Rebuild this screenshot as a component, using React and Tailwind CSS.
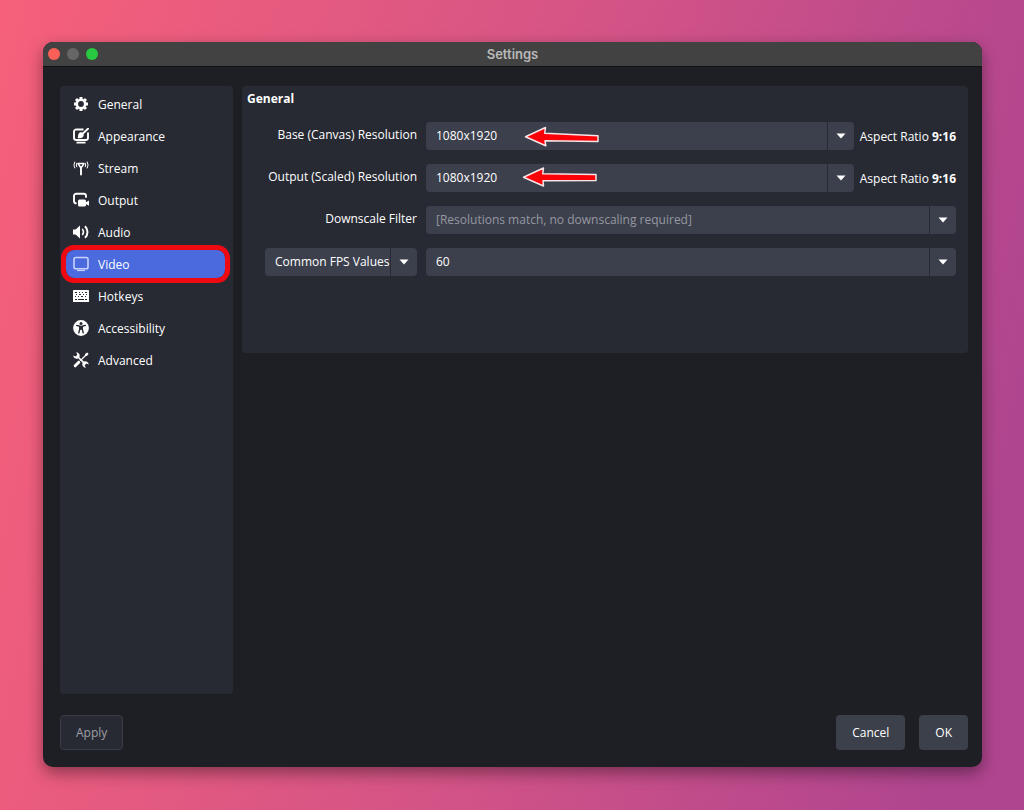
import React, { useState } from "react";

function GearIcon() {
  return (
    <svg viewBox="0 0 16 16" className="size-4" fill="none" stroke="currentColor" aria-hidden="true">
      <circle cx="8" cy="8" r="4.200" strokeWidth="2.600" />
      <path
        d="M8 1v2M8 13v2M1 8h2M13 8h2M3 3l1.500 1.500M11.500 11.500l1.500 1.500M3 13l1.500-1.500M11.500 4.500l1.500-1.500"
        strokeWidth="3"
      />
    </svg>
  );
}

function AppearanceIcon() {
  return (
    <svg viewBox="0 0 16 16" className="size-4" fill="none" stroke="currentColor" aria-hidden="true">
      <path
        d="M10.500 1.500H3.200A2.200 2.200 0 0 0 1 3.700V9.800A2.200 2.200 0 0 0 3.200 12h9.600A2.200 2.200 0 0 0 15 9.800V4.500"
        strokeWidth="1.900"
      />
      <path d="M3.500 14.700h9" strokeWidth="1.700" />
      <path d="M4.600 9.900c.8-1 .1-2.600 1-4.200 1-1.700 3-1.900 4.200-.9 1.300 1.200 1.200 3.200-.1 4.400-1.300 1.100-3.500 1.200-5.100.7z" fill="currentColor" stroke="none" />
      <path d="M10 5.400L15 .7" strokeWidth="1.900" strokeLinecap="round" />
    </svg>
  );
}

function StreamIcon() {
  return (
    <svg viewBox="0 0 16 16" className="size-4" fill="none" stroke="currentColor" strokeLinecap="round" aria-hidden="true">
      <path d="M1.700 2a6 6 0 0 0 0 6M14.300 2a6 6 0 0 1 0 6M3.700 3.200a4 4 0 0 0 0 3.600M12.300 3.200a4 4 0 0 1 0 3.600" strokeWidth="1" />
      <path d="M5 3.600L8 8L11 3.600z" strokeWidth="1.500" strokeLinejoin="round" />
      <path d="M8 8v6.600" strokeWidth="1.900" />
    </svg>
  );
}

function OutputIcon() {
  return (
    <svg viewBox="0 0 16 16" className="size-4" fill="none" stroke="currentColor" aria-hidden="true">
      <path d="M3.600 11.300H3a2 2 0 0 1-2-2V4a2.200 2.200 0 0 1 2.200-2.200h7.600A2.200 2.200 0 0 1 13 4v1.800" strokeWidth="1.900" />
      <rect x="5" y="7.500" width="8" height="7" rx="1.500" fill="currentColor" stroke="none" />
      <path d="M12.400 10.600L16 8.400v5.400l-3.600-2z" fill="currentColor" stroke="none" />
    </svg>
  );
}

function AudioIcon() {
  return (
    <svg viewBox="0 0 16 16" className="size-4" fill="none" stroke="currentColor" aria-hidden="true">
      <path d="M0 5.500h2.600L7 1.500v13L2.600 10.500H0z" fill="currentColor" stroke="none" />
      <path d="M9.200 5a4.200 4.200 0 0 1 0 6" strokeWidth="1.700" />
      <path d="M12 2.200a8 8 0 0 1 0 11.600" strokeWidth="2" />
    </svg>
  );
}

function VideoIcon() {
  return (
    <svg viewBox="0 0 16 16" className="size-4" fill="none" stroke="#c9d3fa" aria-hidden="true">
      <rect x="1" y="1.500" width="14" height="11.300" rx="1.800" strokeWidth="1.600" />
      <path d="M4 14.500h8" strokeWidth="1.200" />
    </svg>
  );
}

function KeyboardIcon() {
  return (
    <svg viewBox="0 0 16 16" className="size-4" aria-hidden="true">
      <rect x="0" y="2" width="16" height="12" rx=".6" fill="currentColor" />
      <path
        d="M2 4.500h2M6 4.500h1M9 4.500h1M12 4.500h2M3 6.500h1M6 6.500h2M10 6.500h1M13 6.500h1M2 8.500h1M5 8.500h1M8 8.500h2M12 8.500h1M2 11.500h2M5 11.500h6M12 11.500h2"
        stroke="#272a33"
        strokeWidth="1"
      />
    </svg>
  );
}

function AccessibilityIcon() {
  return (
    <svg viewBox="0 0 16 16" className="size-4" aria-hidden="true">
      <circle cx="8" cy="8" r="7.900" fill="currentColor" />
      <circle cx="8" cy="3.500" r="1.500" fill="#272a33" />
      <path
        d="M3.600 5.400L6.800 6.200v2.600L5.800 12.800M12.400 5.400L9.200 6.200v2.600l1 4"
        fill="none"
        stroke="#272a33"
        strokeWidth="1.400"
        strokeLinecap="round"
        strokeLinejoin="round"
      />
      <path d="M6.300 5.800h3.400v4H6.300z" fill="#272a33" />
    </svg>
  );
}

function ToolsIcon() {
  return (
    <svg viewBox="0 0 16 16" className="size-4" fill="none" stroke="currentColor" aria-hidden="true">
      <path d="M4.500 4.500l7.200 7.200" strokeWidth="1.700" />
      <path d="M3.200.2a3.400 3.400 0 0 1 3 5.200A3.400 3.400 0 0 1 .2 3.400l2.500 1L4.300 2.800z" fill="currentColor" stroke="none" />
      <path d="M12.800 15.800a3.400 3.400 0 0 1-3-5.200A3.400 3.400 0 0 1 15.800 12.600l-2.500-1-1.600 1.600z" fill="currentColor" stroke="none" />
      <path d="M13.800 2.200L7.400 8.600" strokeWidth="1.300" />
      <path d="M15.600 1.700L14.300.4l-2.300 1.700.1 1.800 1.800.1z" fill="currentColor" stroke="none" />
      <path d="M5.800 10.200l-3.600 3.600" strokeWidth="3" strokeLinecap="round" />
    </svg>
  );
}

const sections = [
  { name: "General", Icon: GearIcon },
  { name: "Appearance", Icon: AppearanceIcon },
  { name: "Stream", Icon: StreamIcon },
  { name: "Output", Icon: OutputIcon },
  { name: "Audio", Icon: AudioIcon },
  { name: "Video", Icon: VideoIcon },
  { name: "Hotkeys", Icon: KeyboardIcon },
  { name: "Accessibility", Icon: AccessibilityIcon },
  { name: "Advanced", Icon: ToolsIcon },
];

function PointerArrow({ className, d }) {
  return (
    <svg viewBox="0 0 76 22" className={`pointer-events-none absolute h-[22px] w-[76px] ${className}`} aria-hidden="true">
      <path d={d} fill="#fb0007" stroke="#f6e4e6" strokeWidth="1.500" strokeLinejoin="round" />
    </svg>
  );
}

function Select({ label, id, options, disabled, className = "", children }) {
  return (
    <div className={`relative flex h-7 min-w-0 rounded bg-[#3c404d] ${className}`}>
      <select
        id={id}
        aria-label={label}
        disabled={disabled}
        className="h-7 w-full appearance-none rounded bg-transparent pr-6 pl-[10px] text-[12px] leading-4 text-white opacity-100 disabled:text-[#9597a0]"
      >
        {options.map((o) => (
          <option key={o}>{o}</option>
        ))}
      </select>
      <span className="pointer-events-none absolute inset-y-0 right-0 flex w-[27px] items-center justify-center border-l border-[#272a33]">
        <svg viewBox="0 0 10 6" className="h-[6px] w-[10px]" aria-hidden="true">
          <path d="M.5.500h9L5 5.500z" fill="#fff" />
        </svg>
      </span>
      {children}
    </div>
  );
}

function AspectRatio() {
  return (
    <span className="shrink-0 pt-0.5 whitespace-nowrap">
      Aspect Ratio <b className="font-bold">9:16</b>
    </span>
  );
}

const labelStyle = "pb-0.5 text-right";

export default function App() {
  const [active, setActive] = useState("Video");
  return (
    <div className="flex min-h-screen bg-[linear-gradient(103deg,#f6607a_0%,#d45486_50%,#b0458f_92%)] pt-[42px] pr-[42px] pb-[43px] pl-[43px] font-['Open_Sans'] text-[12px] leading-4 text-white">
      <div className="flex flex-1 flex-col overflow-hidden rounded-[10px] bg-[#1e1f24] shadow-[0_6px_16px_rgba(0,0,0,0.4)]">
        <header className="grid h-[25px] grid-cols-[1fr_auto_1fr] items-center border-b border-[#101114] bg-[#424242] px-[5px]">
          <div className="flex gap-[7px]">
            <button aria-label="Close" className="size-3 rounded-full bg-[#fc5f57]" />
            <button aria-label="Minimize" className="size-3 rounded-full bg-[#666666]" />
            <button aria-label="Zoom" className="size-3 rounded-full bg-[#28c840]" />
          </div>
          <h1 className="font-['Inter'] text-[13px] leading-4 font-semibold text-[#b9b9b9]">Settings</h1>
        </header>

        <div className="flex flex-1 gap-[9px] pt-[19px] pr-[14px] pl-[17px]">
          <nav className="w-[173px] shrink-0 rounded bg-[#272a33] pt-1 pr-2 pl-[6px]">
            <ul className="flex flex-col gap-1">
              {sections.map(({ name, Icon }) => (
                <li key={name}>
                  <button
                    onClick={() => setActive(name)}
                    className={
                      active === name
                        ? "flex h-7 w-full items-center gap-[9px] rounded-lg bg-[#4a6ade] pl-[7px] outline-[5px] outline-[#ee0a10]"
                        : "flex h-7 w-full items-center gap-[9px] rounded-lg pl-[7px]"
                    }
                  >
                    <Icon />
                    <span className="pt-0.5">{name}</span>
                  </button>
                </li>
              ))}
            </ul>
          </nav>

          <main className="min-w-0 flex-1">
            <section className="rounded bg-[#272a33] pt-[5px] pr-3 pb-[77px]">
              <h2 className="pl-[5px] font-bold">General</h2>
              <div className="mt-[15px] grid grid-cols-[175px_minmax(0,1fr)] items-center gap-x-[9px] gap-y-[14px]">
                <label htmlFor="base" className={labelStyle}>
                  Base (Canvas) Resolution
                </label>
                <div className="flex items-center gap-[6px]">
                  <Select id="base" options={["1080x1920", "1920x1080", "1280x720"]} className="flex-1">
                    <PointerArrow
                      className="top-[4px] left-[98px]"
                      d="M1.500 10.800L21.500 1.500L20.700 7.200L74 9.800V15.500L21 14.800L21.800 19.800z"
                    />
                  </Select>
                  <AspectRatio />
                </div>

                <label htmlFor="output" className={labelStyle}>
                  Output (Scaled) Resolution
                </label>
                <div className="flex items-center gap-[6px]">
                  <Select id="output" options={["1080x1920", "720x1280"]} className="flex-1">
                    <PointerArrow
                      className="top-[2px] left-[96px]"
                      d="M1.500 11.200L21.500 2L20.700 7.800L74 8.500V14.500L21 14.800L21.500 20z"
                    />
                  </Select>
                  <AspectRatio />
                </div>

                <label htmlFor="filter" className={labelStyle}>
                  Downscale Filter
                </label>
                <Select id="filter" disabled options={["[Resolutions match, no downscaling required]"]} />

                <Select
                  label="FPS type"
                  options={["Common FPS Values", "Integer FPS Value", "Fractional FPS Value"]}
                  className="ml-[23px]"
                />
                <Select label="FPS value" options={["60", "30", "24"]} />
              </div>
            </section>
          </main>
        </div>

        <footer className="flex gap-[14px] pt-[21px] pr-[14px] pb-[17px] pl-[17px]">
          <button disabled className="mr-auto h-[35px] rounded border border-[#3a3d47] bg-[#272a33] px-[15px] text-[#9d9fa6]">
            Apply
          </button>
          <button className="h-[35px] rounded bg-[#3c404b] px-4">Cancel</button>
          <button className="h-[35px] rounded bg-[#3c404b] px-4">OK</button>
        </footer>
      </div>
    </div>
  );
}
